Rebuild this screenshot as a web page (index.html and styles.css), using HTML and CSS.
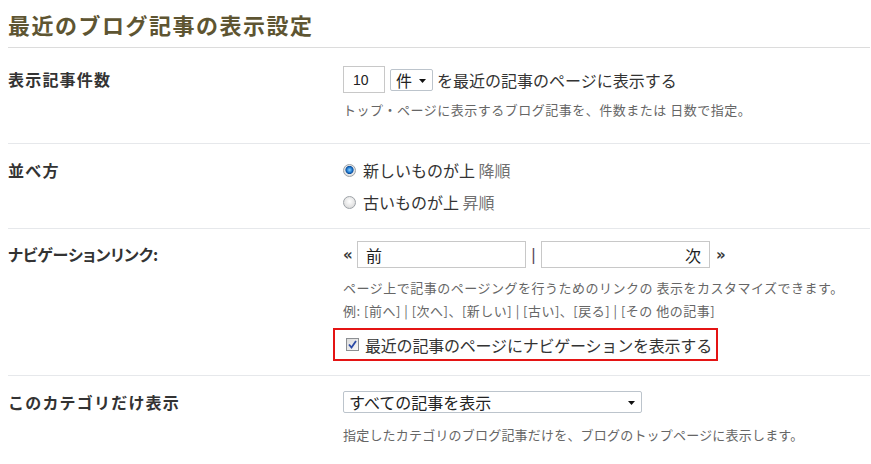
FILE: index.html
```html
<!DOCTYPE html>
<html lang="ja">
<head>
<meta charset="utf-8">
<link rel="stylesheet" href="styles.css">
</head>
<body>
<div class="page">
  <h1 class="title">最近のブログ記事の表示設定</h1>

  <div class="row row-count">
    <div class="label">表示記事件数</div>
    <div class="field">
      <div class="line">
        <span class="input input-num">10</span>
        <span class="select select-unit">件<svg class="arrow" width="7" height="4" viewBox="0 0 7 4"><path d="M0 0H7L3.5 4Z" fill="#111"/></svg></span>
        <span class="text">を最近の記事のページに表示する</span>
      </div>
      <p class="help help-count">トップ・ページに表示するブログ記事を、件数または 日数で指定。</p>
    </div>
  </div>

  <div class="row row-order">
    <div class="label">並べ方</div>
    <div class="field">
      <div class="radio-line"><span class="radio checked"></span><span class="text">新しいものが上 <span class="sub">降順</span></span></div>
      <div class="radio-line"><span class="radio"></span><span class="text">古いものが上 <span class="sub">昇順</span></span></div>
    </div>
  </div>

  <div class="row row-nav">
    <div class="label label-nav">ナビゲーションリンク:</div>
    <div class="field">
      <div class="line">
        <span class="quote">«</span>
        <span class="input input-nav">前</span>
        <span class="bar">|</span>
        <span class="input input-nav right">次</span>
        <span class="quote">»</span>
      </div>
      <p class="help help-nav1">ページ上で記事のページングを行うためのリンクの 表示をカスタマイズできます。</p>
      <p class="help help-nav2">例: [前へ] | [次へ]、[新しい] | [古い]、[戻る] | [その 他の記事]</p>
      <div class="highlight">
        <span class="checkbox"><svg width="9" height="9" viewBox="0 0 9 9"><path d="M1 4.5L3.5 7.5L8 1" fill="none" stroke="#2b4aa6" stroke-width="1.8"/></svg></span>
        <span class="text">最近の記事のページにナビゲーションを表示する</span>
      </div>
    </div>
  </div>

  <div class="row row-cat">
    <div class="label">このカテゴリだけ表示</div>
    <div class="field">
      <div class="line">
        <span class="select select-cat">すべての記事を表示<svg class="arrow" width="7" height="4" viewBox="0 0 7 4"><path d="M0 0H7L3.5 4Z" fill="#111"/></svg></span>
      </div>
      <p class="help help-cat">指定したカテゴリのブログ記事だけを、ブログのトップページに表示します。</p>
    </div>
  </div>
</div>
</body>
</html>
```

FILE: styles.css
```css
html, body {
  margin: 0;
  padding: 0;
  background: #fff;
}

body {
  font-family: "Noto Sans CJK JP", "Noto Sans", sans-serif;
  color: #333;
}

.page {
  padding-left: 8px;
  width: 862px;
}

.title {
  margin: 0;
  padding: 9px 0 8px;
  font-size: 22px;
  line-height: 30px;
  font-weight: bold;
  letter-spacing: 1.5px;
  color: #5e5532;
  border-bottom: 1px solid #dcdcdc;
}

.row {
  display: grid;
  grid-template-columns: 335px 1fr;
  border-top: 1px solid #e6e8eb;
}

.row-count { border-top: none; padding: 18px 0 23px; }
.row-order { padding: 10px 0 10px; }
.row-nav { padding: 12px 0 14px; }
.row-cat { padding: 15px 0 20px; }

.label {
  font-size: 16px;
  font-weight: bold;
  letter-spacing: 1.2px;
  color: #333;
  line-height: 27px;
}

.label-nav {
  letter-spacing: 0;
  font-feature-settings: "palt";
}

.row-order .label { line-height: 32px; }
.row-cat .label { line-height: 22px; }

.field {
  display: flex;
  flex-direction: column;
  align-items: flex-start;
}

.line {
  display: flex;
  align-items: center;
  height: 27px;
}

.row-cat .line { height: 22px; }

.text {
  font-size: 16px;
  color: #333;
  white-space: nowrap;
}

.input {
  box-sizing: border-box;
  display: flex;
  align-items: center;
  height: 27px;
  border: 1px solid #c8c8c8;
  background: #fff;
  font-size: 16px;
  color: #222;
}

.input-num {
  width: 42px;
  padding-left: 9px;
  font-family: "Liberation Sans", Arial, sans-serif;
  font-size: 14px;
}

.input-nav {
  width: 169px;
  padding: 0 8px;
}

.input-nav.right { justify-content: flex-end; }

.select {
  box-sizing: border-box;
  display: flex;
  align-items: center;
  justify-content: space-between;
  height: 22px;
  border: 1px solid #bcc4cc;
  border-radius: 2px;
  background: #fff;
  font-size: 16px;
  color: #222;
  padding: 0 6px 0 5px;
}

.select-unit {
  width: 43px;
  margin: 0 4px 0 5px;
}

.select-cat {
  width: 299px;
}

.arrow { flex: none; margin-top: 2px; }

.help {
  margin: 0;
  font-size: 13px;
  line-height: 20px;
  letter-spacing: 0.5px;
  color: #666;
  white-space: nowrap;
}

.help-count { margin-top: 7px; }
.help-nav1 { margin-top: 8px; line-height: 23px; }
.help-nav2 { line-height: 23px; }
.help-cat { margin-top: 12px; letter-spacing: 0.2px; }

.radio-line {
  display: flex;
  align-items: center;
  height: 32px;
}

.radio {
  box-sizing: border-box;
  width: 13px;
  height: 13px;
  border-radius: 50%;
  border: 1px solid #9ea3a8;
  background: radial-gradient(circle at 50% 40%, #ffffff 0%, #e6e6e6 55%, #cfcfcf 100%);
  margin-right: 7px;
  flex: none;
}

.radio.checked {
  background: radial-gradient(circle at 50% 45%, #8fd0ff 0%, #2a86d8 28%, #0c4f9e 45%, #e9e9e9 55%, #cfcfcf 100%);
}

.sub { color: #707070; }

.quote {
  font-size: 15px;
  font-weight: bold;
  color: #3a3a3a;
  width: 14px;
  font-family: "DejaVu Sans", sans-serif;
}

.bar {
  font-size: 16px;
  color: #5a4a5e;
  width: 15px;
  text-align: center;
  font-family: "DejaVu Sans", sans-serif;
}

.input-nav.right + .quote { margin-left: 6px; }

.highlight {
  box-sizing: border-box;
  display: flex;
  align-items: center;
  height: 33px;
  width: 385px;
  margin: 6px 0 0 -10px;
  padding-left: 11px;
  border: 2px solid #e41414;
}

.highlight .text { letter-spacing: -0.2px; }

.checkbox {
  box-sizing: border-box;
  display: flex;
  align-items: center;
  justify-content: center;
  width: 13px;
  height: 13px;
  border: 1px solid #8c8f93;
  background: linear-gradient(135deg, #dcdcdc, #f7f7f7);
  margin-right: 6px;
  flex: none;
}
```
